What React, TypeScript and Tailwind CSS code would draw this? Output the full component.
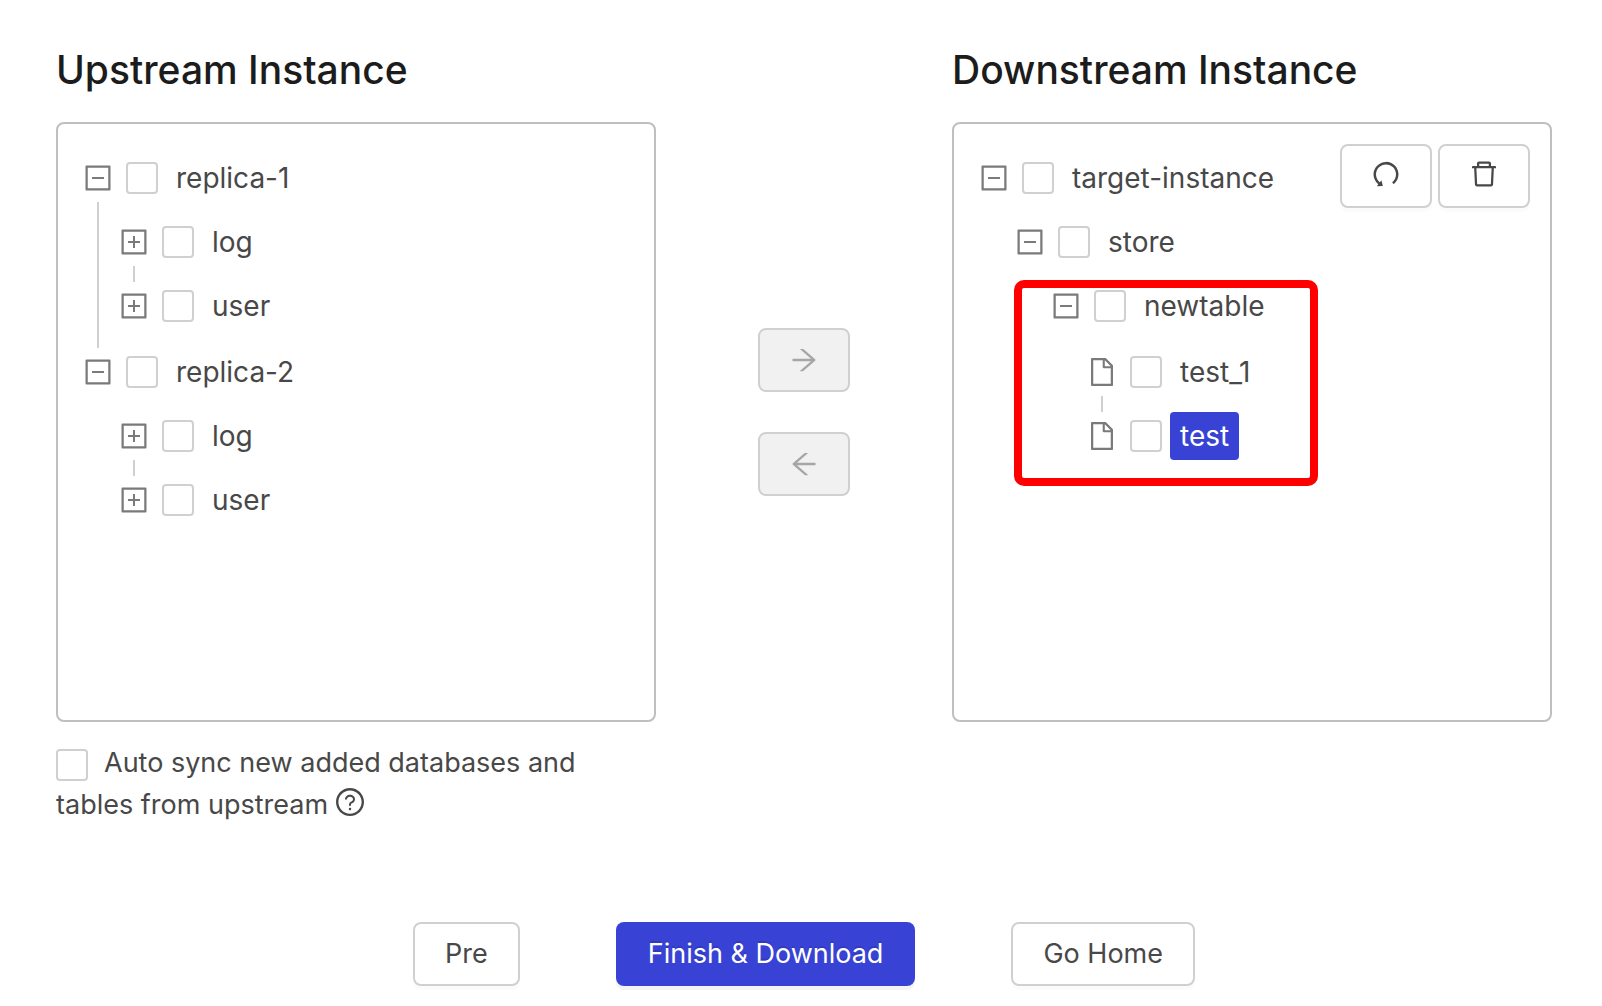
import { useState } from 'react';
import clsx from 'clsx';
import {
  AiOutlineArrowLeft,
  AiOutlineArrowRight,
  AiOutlineDelete,
  AiOutlineFile,
  AiOutlineMinusSquare,
  AiOutlinePlusSquare,
  AiOutlineQuestionCircle,
  AiOutlineUndo,
} from 'react-icons/ai';

type TreeItem = {
  key: string;
  title: string;
  leaf?: boolean;
  marked?: boolean;
  children?: TreeItem[];
};

const upstream: TreeItem[] = [
  {
    key: 'replica-1',
    title: 'replica-1',
    children: [
      { key: 'replica-1/log', title: 'log' },
      { key: 'replica-1/user', title: 'user' },
    ],
  },
  {
    key: 'replica-2',
    title: 'replica-2',
    children: [
      { key: 'replica-2/log', title: 'log' },
      { key: 'replica-2/user', title: 'user' },
    ],
  },
];

const downstream: TreeItem[] = [
  {
    key: 'target-instance',
    title: 'target-instance',
    children: [
      {
        key: 'store',
        title: 'store',
        children: [
          {
            key: 'newtable',
            title: 'newtable',
            marked: true,
            children: [
              { key: 'test_1', title: 'test_1', leaf: true },
              { key: 'test', title: 'test', leaf: true },
            ],
          },
        ],
      },
    ],
  },
];

const checkboxClass =
  'h-8 w-8 shrink-0 appearance-none rounded-sm border-2 border-[#d0d0d0] bg-white checked:border-[#3843d6] checked:bg-[#3843d6]';

const buttonClass =
  'flex h-16 items-center justify-center rounded-lg border-2 border-[#d0d0d0] bg-white shadow-[0_4px_0_rgba(0,0,0,0.016)]';

type NodeProps = {
  item: TreeItem;
  last: boolean;
  selected: string;
  onSelect: (key: string) => void;
};

function TreeNode({ item, last, selected, onSelect }: NodeProps) {
  const children = item.children ?? [];

  return (
    <li className="relative grid grid-cols-[36px_auto]">
      {/* Switcher with the line down to the next sibling */}
      <div className="flex w-8 flex-col items-center text-[#7a7a7a]">
        {item.leaf ? (
          <span className="flex h-12 items-center">
            <AiOutlineFile size={32} />
          </span>
        ) : (
          <button type="button" aria-label={`Toggle ${item.title}`} className="flex h-12 items-center">
            {children.length > 0 ? <AiOutlineMinusSquare size={32} /> : <AiOutlinePlusSquare size={32} />}
          </button>
        )}
        {!last && <span className="w-0.5 grow bg-[#d0d0d0]" />}
      </div>

      <div className={clsx(!last && children.length > 0 && 'pb-0.5')}>
        <div className="mb-4 flex h-12 items-center gap-2 pl-2">
          <input type="checkbox" aria-label={item.title} className={checkboxClass} />
          <button
            type="button"
            onClick={() => onSelect(item.key)}
            className={clsx(
              'h-12 rounded-sm px-2.5 whitespace-nowrap',
              selected === item.key && 'bg-[#3843d6] text-white',
            )}
          >
            {item.title}
          </button>
        </div>
        {children.length > 0 && (
          <TreeList items={children} selected={selected} onSelect={onSelect} />
        )}
      </div>

      {item.marked && (
        <div className="pointer-events-none absolute -top-0.5 -left-9 h-[206px] w-[304px] rounded-[10px] border-8 border-[#ff0000]" />
      )}
    </li>
  );
}

type ListProps = {
  items: TreeItem[];
  selected: string;
  onSelect: (key: string) => void;
};

function TreeList({ items, selected, onSelect }: ListProps) {
  return (
    <ul className={clsx('flex flex-col text-[28px]', items[0].leaf && 'pt-0.5')}>
      {items.map((item, i) => (
        <TreeNode
          key={item.key}
          item={item}
          last={i === items.length - 1}
          selected={selected}
          onSelect={onSelect}
        />
      ))}
    </ul>
  );
}

export default function App() {
  const [source, setSource] = useState('');
  const [target, setTarget] = useState('test');

  return (
    <main className="bg-white pt-10 pr-[50px] pb-5 pl-14 font-['Inter','Noto_Sans',sans-serif] text-[27px] leading-[42px] text-[#484848]">
      <div className="grid grid-cols-[1fr_296px_1fr]">
        {/* Upstream */}
        <section>
          <h2 className="mb-[22px] text-[39px] leading-[60px] font-medium text-[#1c1c1c]">Upstream Instance</h2>
          <div className="min-h-[600px] rounded-lg border-2 border-[#bfbfbf] px-6 pt-[30px]">
            <TreeList items={upstream} selected={source} onSelect={setSource} />
          </div>
          <div className="mt-5">
            <input id="auto-sync" type="checkbox" className={clsx(checkboxClass, 'mr-4 align-middle')} />
            <label htmlFor="auto-sync">Auto sync new added databases and tables from upstream</label>
            <AiOutlineQuestionCircle size={32} className="ml-1.5 inline align-[-4px]" />
          </div>
        </section>

        {/* Transfer buttons */}
        <div className="flex flex-col items-center gap-10 pt-72">
          <button
            type="button"
            disabled
            aria-label="Move right"
            className="flex h-16 w-[92px] items-center justify-center rounded-lg border-2 border-[#d0d0d0] bg-[#f1f1f1] text-[#a6a6a6]"
          >
            <AiOutlineArrowRight size={32} />
          </button>
          <button
            type="button"
            disabled
            aria-label="Move left"
            className="flex h-16 w-[92px] items-center justify-center rounded-lg border-2 border-[#d0d0d0] bg-[#f1f1f1] text-[#a6a6a6]"
          >
            <AiOutlineArrowLeft size={32} />
          </button>
        </div>

        {/* Downstream */}
        <section>
          <h2 className="mb-[22px] text-[39px] leading-[60px] font-medium text-[#1c1c1c]">Downstream Instance</h2>
          <div className="flex min-h-[600px] items-start justify-between rounded-lg border-2 border-[#bfbfbf] pt-5 pr-5 pl-6">
            <div className="pt-2.5">
              <TreeList items={downstream} selected={target} onSelect={setTarget} />
            </div>
            <div className="flex gap-1.5">
              <button type="button" aria-label="Reset" className={clsx(buttonClass, 'w-[92px] pb-1')}>
                <AiOutlineUndo size={32} />
              </button>
              <button type="button" aria-label="Delete" className={clsx(buttonClass, 'w-[92px] pb-1')}>
                <AiOutlineDelete size={32} />
              </button>
            </div>
          </div>
        </section>
      </div>

      <footer className="mt-24 flex justify-center gap-24">
        <button type="button" className={clsx(buttonClass, 'px-[30px]')}>
          Pre
        </button>
        <button
          type="button"
          className="h-16 rounded-lg bg-[#3843d6] px-8 text-white shadow-[0_4px_0_rgba(0,0,0,0.043)] [text-shadow:0_-2px_0_rgba(0,0,0,0.12)]"
        >
          Finish &amp; Download
        </button>
        <button type="button" className={clsx(buttonClass, 'px-[30px]')}>
          Go Home
        </button>
      </footer>
    </main>
  );
}
